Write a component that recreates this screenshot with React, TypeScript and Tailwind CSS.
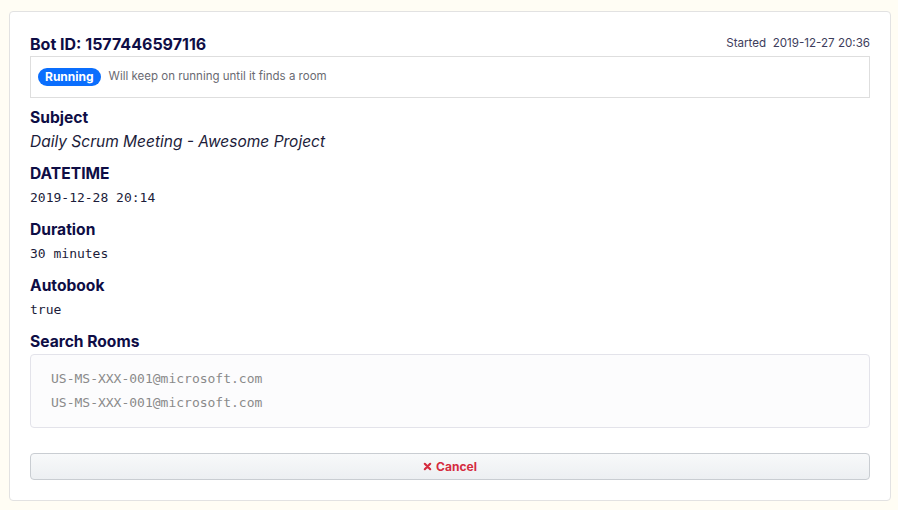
import React from 'react';

const sans = { fontFamily: 'Inter, "Noto Sans", sans-serif' };

function Field({ label, children }: { label: string; children: React.ReactNode }) {
  return (
    <div className="mt-2">
      <div className="text-[15.6px] leading-6 font-bold text-[#0e0d45]">{label}</div>
      {children}
    </div>
  );
}

function Mono({ children }: { children: React.ReactNode }) {
  return <div className="font-['DejaVu_Sans_Mono',monospace] text-[13px] leading-6 text-[#1c1c3a]">{children}</div>;
}

export default function App() {
  const rooms = ['US-MS-XXX-001@microsoft.com', 'US-MS-XXX-001@microsoft.com'];

  return (
    <div className="min-h-[510px] bg-[#fffdf4] pl-[9px] pr-[7px] pt-[11px] pb-[10px]" style={sans}>
      <div className="rounded border border-[#e2e2e2] bg-white px-5 pt-5 pb-5">
        <div className="flex items-center justify-between h-6">
          <h2 className="text-[16px] font-bold text-[#0e0d45] leading-6">Bot ID: 1577446597116</h2>
          <span className="text-[11.6px] text-[#3d3d5c]">Started&nbsp; 2019-12-27 20:36</span>
        </div>
        <div className="flex items-center gap-2 border border-[#dedede] h-[42px] px-[7px]">
          <span className="rounded-full bg-[#0a6efd] px-[7px] h-[18px] leading-[18px] text-[12px] font-bold text-white">Running</span>
          <span className="text-[11.5px] text-[#6a6a72]">Will keep on running until it finds a room</span>
        </div>

        <Field label="Subject">
          <div className="text-[15.5px] leading-6 italic text-[#1c1c3a]">Daily Scrum Meeting - Awesome Project</div>
        </Field>
        <Field label="DATETIME">
          <Mono>2019-12-28 20:14</Mono>
        </Field>
        <Field label="Duration">
          <Mono>30 minutes</Mono>
        </Field>
        <Field label="Autobook">
          <Mono>true</Mono>
        </Field>
        <Field label="Search Rooms">
          <div className="rounded border border-[#e3e3ea] bg-[#fcfcfd] px-5 py-3">
            {rooms.map((r, i) => (
              <div key={i} className="font-['DejaVu_Sans_Mono',monospace] text-[13px] leading-6 text-[#8a8a8a]">{r}</div>
            ))}
          </div>
        </Field>

        <button className="mt-[25px] flex w-full h-[27px] items-center justify-center gap-1 rounded border border-[#c9cdd2] bg-gradient-to-b from-[#f8f9fa] to-[#eceff2] text-[12px] font-bold text-[#d52b3e]">
          <svg width="9" height="9" viewBox="0 0 10 10">
            <path d="M2 2 L8 8 M8 2 L2 8" stroke="#d52b3e" strokeWidth="2.4" strokeLinecap="round" />
          </svg>
          Cancel
        </button>
      </div>
    </div>
  );
}
